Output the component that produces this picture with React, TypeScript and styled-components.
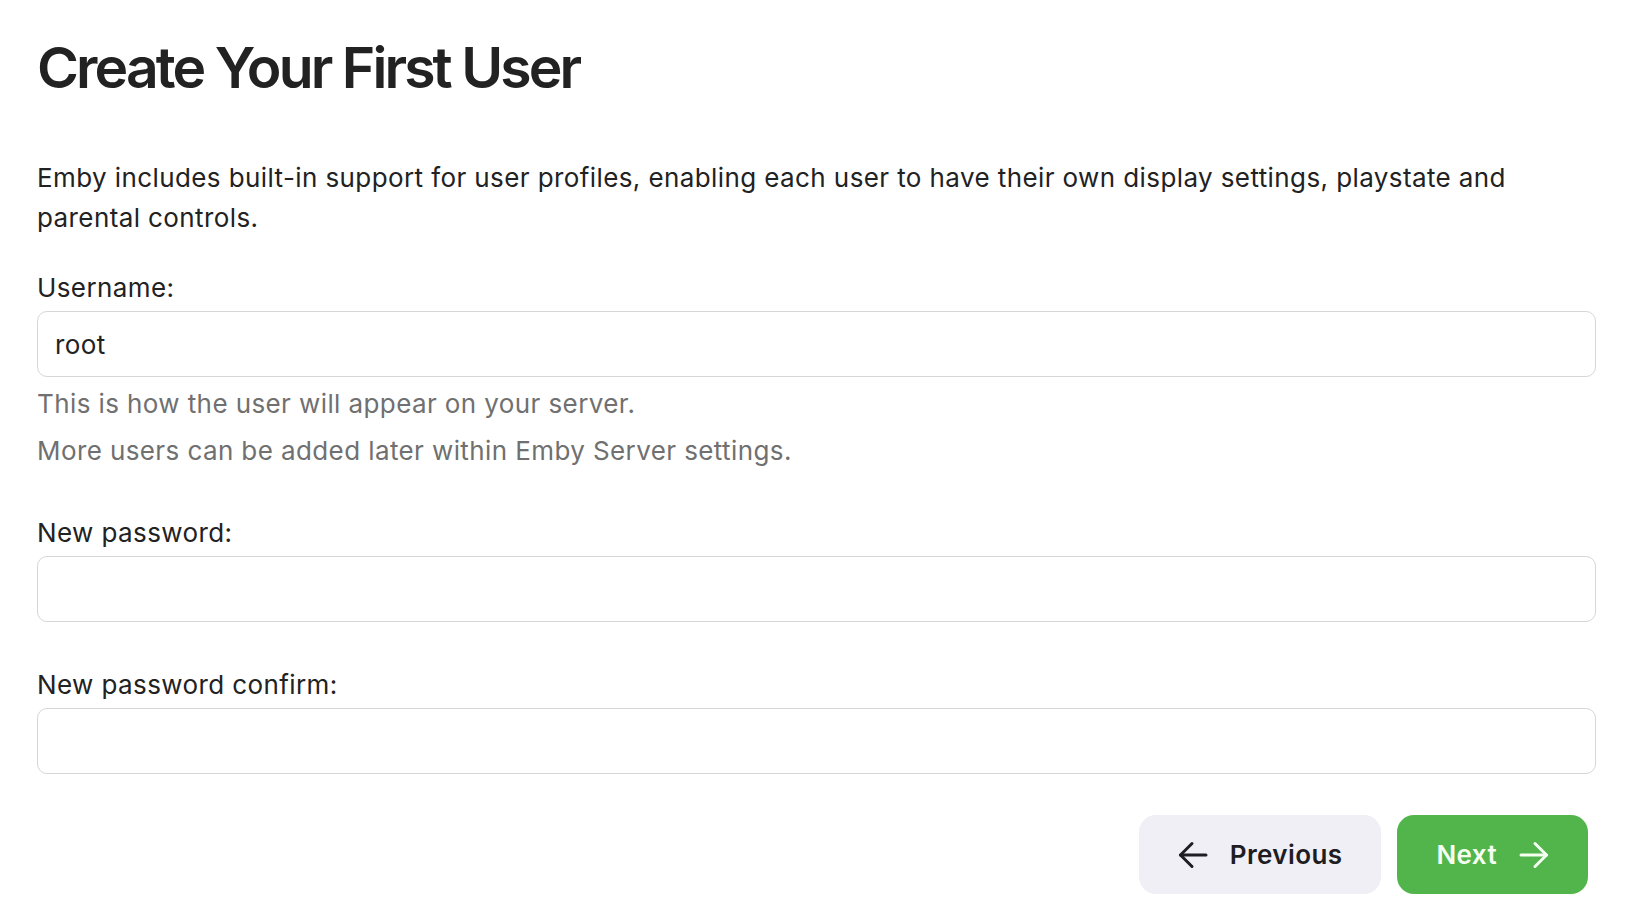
import React, { useState } from "react";
import { styled, createGlobalStyle } from "styled-components";

const GlobalStyle = createGlobalStyle`
  body {
    margin: 0;
    background: #ffffff;
    font-family: Inter, "Noto Sans", "Liberation Sans", sans-serif;
    color: #222222;
  }
`;

const ArrowIcon = ({ dir }: { dir: "left" | "right" }) => (
  <svg
    width="30"
    height="30"
    viewBox="0 0 30 30"
    fill="none"
    stroke="currentColor"
    strokeWidth="3"
    strokeLinecap="round"
    strokeLinejoin="round"
  >
    {dir === "left" ? (
      <>
        <path d="M28 15H2.5" />
        <path d="M14 3.5L2.5 15 14 26.5" />
      </>
    ) : (
      <>
        <path d="M2 15h25.5" />
        <path d="M16 3.5L27.5 15 16 26.5" />
      </>
    )}
  </svg>
);

const App = () => {
  const [username, setUsername] = useState("root");
  const [password, setPassword] = useState("");
  const [confirm, setConfirm] = useState("");

  return (
    <>
      <GlobalStyle />
      <S.Page>
        <S.Title>Create Your First User</S.Title>
        <S.Intro>
          Emby includes built-in support for user profiles, enabling each user
          to have their own display settings, playstate and parental controls.
        </S.Intro>

        <S.Field>
          <S.Label htmlFor="username">Username:</S.Label>
          <S.Input
            id="username"
            value={username}
            onChange={(e) => setUsername(e.target.value)}
          />
          <S.Help>This is how the user will appear on your server.</S.Help>
          <S.Help>More users can be added later within Emby Server settings.</S.Help>
        </S.Field>

        <S.Field>
          <S.Label htmlFor="pw">New password:</S.Label>
          <S.Input
            id="pw"
            type="password"
            value={password}
            onChange={(e) => setPassword(e.target.value)}
          />
        </S.Field>

        <S.Field>
          <S.Label htmlFor="pw2">New password confirm:</S.Label>
          <S.Input
            id="pw2"
            type="password"
            value={confirm}
            onChange={(e) => setConfirm(e.target.value)}
          />
        </S.Field>

        <S.Actions>
          <S.Button $variant="secondary">
            <ArrowIcon dir="left" />
            Previous
          </S.Button>
          <S.Button $variant="primary">
            Next
            <ArrowIcon dir="right" />
          </S.Button>
        </S.Actions>
      </S.Page>
    </>
  );
};

export default App;

const S = {
  Page: styled.main`
    padding: 0 30px 0 37px;
    letter-spacing: 0.4px;
  `,
  Title: styled.h1`
    margin: 34px 0 0;
    font-size: 57px;
    line-height: 68px;
    font-weight: 600;
    letter-spacing: -2.9px;
    color: #222222;
  `,
  Intro: styled.p`
    margin: 56px 0 31px;
    font-size: 26px;
    line-height: 40px;
    font-weight: 400;
  `,
  Field: styled.div`
    display: flex;
    flex-direction: column;
    & + & {
      margin-top: 44px;
    }
  `,
  Label: styled.label`
    font-size: 26px;
    line-height: 38px;
    margin-bottom: 4px;
  `,
  Input: styled.input`
    box-sizing: border-box;
    width: 100%;
    height: 66px;
    padding: 0 17px;
    border: 1px solid #d6d6d6;
    border-radius: 10px;
    background: #ffffff;
    font-family: inherit;
    font-size: 26px;
    letter-spacing: 0.4px;
    color: #222222;
    outline: none;
  `,
  Help: styled.div`
    font-size: 26px;
    line-height: 38px;
    color: #707070;
    margin-top: 8px;
    & + & {
      margin-top: 9px;
    }
  `,
  Actions: styled.div`
    display: flex;
    justify-content: flex-end;
    gap: 16px;
    margin-top: 41px;
    padding-right: 8px;
  `,
  Button: styled.button<{ $variant: "primary" | "secondary" }>`
    display: flex;
    align-items: center;
    gap: 22px;
    height: 79px;
    padding: 0 39px;
    border: none;
    border-radius: 17px;
    font-family: inherit;
    font-size: 26px;
    font-weight: 600;
    letter-spacing: 0.4px;
    cursor: pointer;
    background: ${(p) => (p.$variant === "primary" ? "#52b54b" : "#f0eff5")};
    color: ${(p) => (p.$variant === "primary" ? "#f4fff2" : "#1d1d22")};
  `,
};
